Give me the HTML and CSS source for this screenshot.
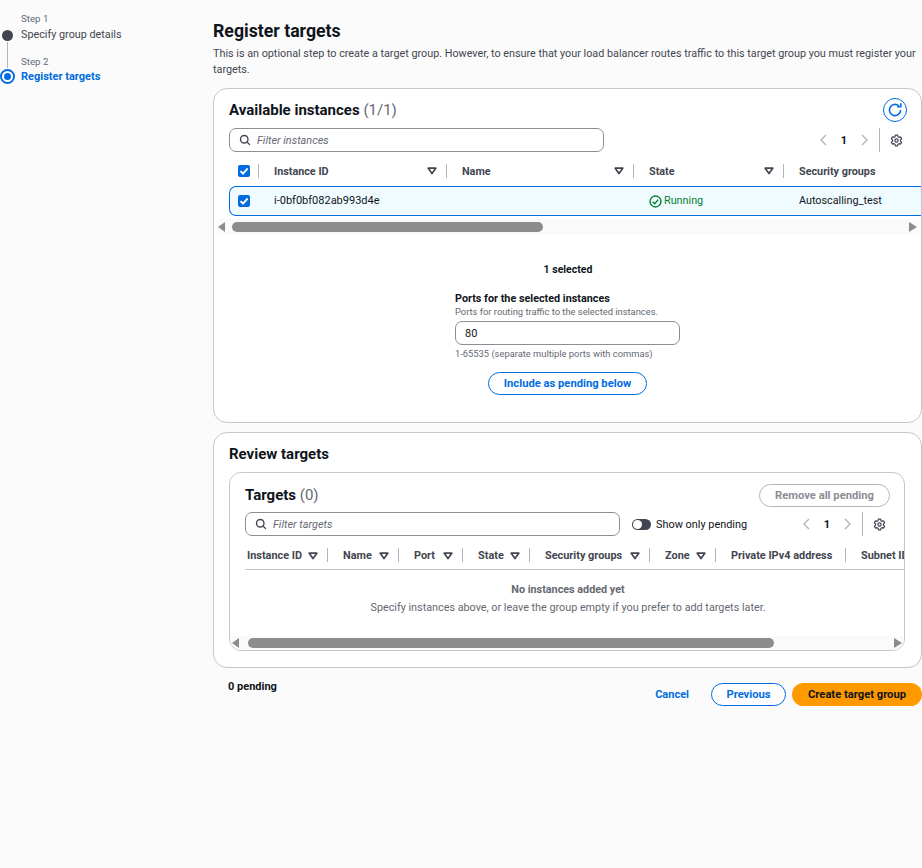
FILE: index.html
```html
<!DOCTYPE html>
<html lang="en">
<head>
<meta charset="utf-8">
<title>Register targets</title>
<link rel="stylesheet" href="styles.css">
</head>
<body>
<svg class="defs" width="0" height="0">
  <symbol id="search" viewBox="0 0 16 16"><circle cx="7" cy="7" r="5" fill="none" stroke="currentColor" stroke-width="1.8"/><path d="M10.7 10.7 14.5 14.5" stroke="currentColor" stroke-width="1.8" fill="none"/></symbol>
  <symbol id="caret" viewBox="0 0 10 8"><path d="M1.2 1.2h7.6L5 6.6z" fill="none" stroke="currentColor" stroke-width="1.7" stroke-linejoin="round"/></symbol>
  <symbol id="left" viewBox="0 0 8 12"><path d="M7 1 2 6l5 5" fill="none" stroke="currentColor" stroke-width="1.4"/></symbol>
  <symbol id="right" viewBox="0 0 8 12"><path d="M1 1l5 5-5 5" fill="none" stroke="currentColor" stroke-width="1.4"/></symbol>
  <symbol id="gear" viewBox="0 0 16 16"><path d="M6.6 1.5h2.8l.4 1.9 1.3.7 1.8-.6 1.4 2.4-1.4 1.3v1.6l1.4 1.3-1.4 2.4-1.8-.6-1.3.7-.4 1.9H6.6l-.4-1.9-1.3-.7-1.8.6-1.4-2.4 1.4-1.3V7.2L1.7 5.9l1.4-2.4 1.8.6 1.3-.7z" fill="none" stroke="currentColor" stroke-width="1.5" stroke-linejoin="round"/><circle cx="8" cy="8" r="2" fill="none" stroke="currentColor" stroke-width="1.5"/></symbol>
  <symbol id="check" viewBox="0 0 12 12"><path d="M2.5 6.2 5 8.7l4.6-5.2" fill="none" stroke="#fff" stroke-width="1.9"/></symbol>
</svg>
<div class="page">
  <nav class="steps">
    <div class="step">
      <div class="step-label">Step 1</div>
      <div class="step-title">Specify group details</div>
      <span class="dot"></span>
      <span class="line"></span>
    </div>
    <div class="step step-active">
      <div class="step-label">Step 2</div>
      <div class="step-title active">Register targets</div>
      <span class="dot-active"></span>
    </div>
  </nav>
  <main class="content">
    <h1>Register targets</h1>
    <p class="intro">This is an optional step to create a target group. However, to ensure that your load balancer routes traffic to this target group you must register your targets.</p>

    <section class="card card-available">
      <div class="card-head">
        <h2>Available instances <span class="count">(1/1)</span></h2>
        <button class="refresh" aria-label="Refresh"><svg width="16" height="16" viewBox="0 0 16 16"><path d="M13.6 8a5.6 5.6 0 1 1-1.8-4.1" fill="none" stroke="currentColor" stroke-width="1.6"/><path d="M13.8 1.2v3.6h-3.6" fill="none" stroke="currentColor" stroke-width="1.6"/></svg></button>
      </div>
      <div class="tools">
        <label class="filter filter-a"><svg class="i-search" width="12" height="12"><use href="#search"/></svg><span>Filter instances</span></label>
        <div class="pager">
          <svg class="chev" width="8" height="12"><use href="#left"/></svg>
          <b>1</b>
          <svg class="chev" width="8" height="12"><use href="#right"/></svg>
          <span class="vsep"></span>
          <svg class="gear" width="13" height="13"><use href="#gear"/></svg>
        </div>
      </div>
      <div class="grid-a grid-head">
        <div class="cell-check"><span class="box"><svg width="12" height="12"><use href="#check"/></svg></span></div>
        <div class="th">Instance ID<svg class="caret" width="10" height="8"><use href="#caret"/></svg></div>
        <div class="th">Name<svg class="caret" width="10" height="8"><use href="#caret"/></svg></div>
        <div class="th">State<svg class="caret" width="10" height="8"><use href="#caret"/></svg></div>
        <div class="th th-last">Security groups</div>
      </div>
      <div class="grid-a grid-row">
        <div class="cell-check"><span class="box"><svg width="12" height="12"><use href="#check"/></svg></span></div>
        <div class="td td-id">i-0bf0bf082ab993d4e</div>
        <div class="td"></div>
        <div class="td running"><svg width="13" height="13" viewBox="0 0 14 14"><circle cx="7" cy="7" r="5.9" fill="none" stroke="currentColor" stroke-width="1.5"/><path d="M4 7.2 6.2 9.4 10 5" fill="none" stroke="currentColor" stroke-width="1.5"/></svg>Running</div>
        <div class="td">Autoscalling_test</div>
      </div>
      <div class="scrollbar scroll-a">
        <i class="arrow-l"></i><span class="thumb thumb-a"></span><i class="arrow-r"></i>
      </div>
      <div class="selected">1 selected</div>
      <div class="ports">
        <div class="ports-label">Ports for the selected instances</div>
        <div class="ports-desc">Ports for routing traffic to the selected instances.</div>
        <div class="ports-input">80</div>
        <div class="ports-desc ports-hint">1-65535 (separate multiple ports with commas)</div>
      </div>
      <div class="include-wrap"><button class="btn btn-outline btn-include">Include as pending below</button></div>
    </section>

    <section class="card card-review">
      <h2 class="review-title">Review targets</h2>
      <div class="inner">
        <div class="inner-head">
          <h2>Targets <span class="count">(0)</span></h2>
          <button class="btn btn-disabled">Remove all pending</button>
        </div>
        <div class="tools tools-b">
          <label class="filter filter-b"><svg class="i-search" width="12" height="12"><use href="#search"/></svg><span>Filter targets</span></label>
          <div class="toggle"><span class="switch"></span>Show only pending</div>
          <div class="pager pager-b">
            <svg class="chev" width="8" height="12"><use href="#left"/></svg>
            <b>1</b>
            <svg class="chev" width="8" height="12"><use href="#right"/></svg>
            <span class="vsep"></span>
            <svg class="gear" width="13" height="13"><use href="#gear"/></svg>
          </div>
        </div>
        <div class="grid-b">
          <div class="tb c1">Instance ID<svg class="caret-b" width="10" height="8"><use href="#caret"/></svg></div>
          <div class="tb c2">Name<svg class="caret-b" width="10" height="8"><use href="#caret"/></svg></div>
          <div class="tb c3">Port<svg class="caret-b" width="10" height="8"><use href="#caret"/></svg></div>
          <div class="tb c4">State<svg class="caret-b" width="10" height="8"><use href="#caret"/></svg></div>
          <div class="tb c5">Security groups<svg class="caret-b" width="10" height="8"><use href="#caret"/></svg></div>
          <div class="tb c6">Zone<svg class="caret-b" width="10" height="8"><use href="#caret"/></svg></div>
          <div class="tb c7">Private IPv4 address</div>
          <div class="tb c8">Subnet ID</div>
        </div>
        <div class="empty">
          <div class="empty-title">No instances added yet</div>
          <div class="empty-desc">Specify instances above, or leave the group empty if you prefer to add targets later.</div>
        </div>
        <div class="scrollbar scroll-b">
          <i class="arrow-l"></i><span class="thumb thumb-b"></span><i class="arrow-r"></i>
        </div>
      </div>
    </section>

    <div class="footer">
      <div class="pending">0 pending</div>
      <div class="actions">
        <a class="cancel">Cancel</a>
        <button class="btn btn-outline btn-prev">Previous</button>
        <button class="btn btn-primary">Create target group</button>
      </div>
    </div>
  </main>
</div>
</body>
</html>
```

FILE: styles.css
```css
* { box-sizing: border-box; }
html, body { margin: 0; padding: 0; }
body {
  width: 922px;
  height: 868px;
  overflow: hidden;
  background: #fbfbfb;
  color: #0f141a;
  font-family: Roboto, "Noto Sans", sans-serif;
  font-size: 11px;
}
.defs { position: absolute; }
.page { display: flex; align-items: flex-start; }

.steps { width: 213px; flex: none; padding-top: 12px; }
.step { position: relative; padding-left: 21px; height: 42px; }
.step-label { font-size: 9.7px; line-height: 14px; color: #5f6b7a; }
.step-active .step-label { padding-top: 1px; line-height: 13px; height: 14px; }
.step-title { padding-top: 1px; font-size: 10.8px; line-height: 16px; color: #424650; }
.step-title.active { color: #006ce0; font-weight: 700; font-size: 11px; }
.dot { position: absolute; left: 2px; top: 18px; width: 11px; height: 11px; border-radius: 50%; background: #424650; }
.line { position: absolute; left: 7px; top: 30px; width: 1px; height: 26px; background: #b4b4bb; }
.dot-active { position: absolute; left: 0; top: 15px; width: 15px; height: 15px; border-radius: 50%; border: 2px solid #006ce0; background: #fff; }
.dot-active::after { content: ""; position: absolute; left: 2px; top: 2px; width: 7px; height: 7px; border-radius: 50%; background: #006ce0; }

.content { width: 709px; flex: none; padding-top: 20px; }
h1 { margin: 0; font-size: 17.7px; line-height: 22px; font-weight: 700; color: #0f141a; }
.intro { margin: 4px 0 0; width: 709px; font-size: 10.8px; line-height: 15.5px; color: #424650; height: 31px; }

.card { background: #fff; border: 1px solid #c6c6cd; border-radius: 14px; }
.card-available { margin-top: 11px; height: 335px; padding: 0 0 0 15px; overflow: hidden; }
.card-review { margin-top: 9px; height: 236px; padding: 0 0 0 15px; }

h2 { margin: 0; font-size: 15px; line-height: 20px; font-weight: 700; }
.count { font-weight: 400; color: #656871; }
.card-head { display: flex; justify-content: space-between; padding-top: 11px; height: 39px; }
.refresh { width: 24px; height: 24px; margin: -2px 14px 0 0; padding: 0; border: 1.5px solid #006ce0; border-radius: 50%; background: #fff; color: #006ce0; display: flex; align-items: center; justify-content: center; }

.tools { display: flex; align-items: center; height: 24px; }
.filter { display: flex; align-items: center; gap: 6px; height: 24px; padding-left: 9px; border: 1px solid #8c8c94; border-radius: 7px; background: #fff; font-style: italic; font-size: 10.9px; color: #656871; }
.filter-a { width: 375px; }
.filter-b { width: 375px; flex: none; }
.i-search { color: #424650; flex: none; }
.pager { display: flex; align-items: center; margin-left: auto; height: 24px; padding-right: 18px; color: #0f141a; }
.pager b { font-size: 11px; width: 34px; text-align: center; }
.chev { color: #b4b4bb; }
.vsep { width: 1px; height: 24px; background: #b4b4bb; margin: 0 10px 0 10px; }
.gear { color: #424650; }

.grid-a { display: grid; grid-template-columns: 29px 188px 187px 150px 138px; width: 692px; }
.grid-head { height: 31px; margin-top: 3px; align-items: center; }
.cell-check { padding-left: 9px; display: flex; align-items: center; height: 100%; }
.box { width: 12px; height: 12px; border-radius: 2px; background: #006ce0; display: block; }
.box svg { display: block; }
.th { position: relative; padding: 2px 0 0 16px; font-weight: 700; font-size: 10.8px; color: #424650; line-height: 16px; white-space: nowrap; }
.th::before { content: ""; position: absolute; left: 0; top: 2px; width: 1px; height: 14px; background: #b4b4bb; }
.caret { position: absolute; right: 9px; top: 5px; color: #424650; }
.grid-row { height: 30px; background: #f0fbff; border: 1px solid #006ce0; border-right: 0; border-radius: 7px 0 0 7px; align-items: center; width: 692px; }
.grid-row .cell-check { padding-left: 8px; }
.grid-row .box { margin-top: -1px; }
.td { padding-left: 15px; font-size: 10.8px; line-height: 16px; white-space: nowrap; color: #0f141a; }
.td-id { font-size: 11px; }
.running { display: flex; align-items: center; gap: 2px; color: #00802f; }

.scrollbar { position: relative; height: 16px; background: #fafafa; }
.scroll-a { margin: 3px 0 0 -12px; width: 702px; height: 16px; }
.thumb { position: absolute; top: 3px; height: 10px; border-radius: 5px; background: #8c8c8c; }
.thumb-a { left: 15px; width: 311px; }
.arrow-l, .arrow-r { position: absolute; top: 3px; width: 0; height: 0; border-top: 5px solid transparent; border-bottom: 5px solid transparent; }
.arrow-l { left: 1px; border-right: 7px solid #8c8c8c; }
.arrow-r { right: 2px; border-left: 8px solid #8c8c8c; }

.selected { margin: 27px 0 0; width: 678px; text-align: center; font-size: 10.5px; font-weight: 700; line-height: 16px; }
.ports { margin: 13px 0 0 226px; width: 225px; }
.ports-label { padding-top: 1px; height: 14px; font-size: 10.8px; font-weight: 700; line-height: 13px; color: #0f141a; }
.ports-desc { font-size: 9.35px; line-height: 13px; color: #656871; white-space: nowrap; }
.ports-input { height: 24px; margin-top: 3px; padding-left: 9px; border: 1px solid #8c8c94; border-radius: 7px; font-size: 11px; line-height: 23px; }
.ports-hint { margin-top: 2px; }
.include-wrap { margin: 12px 0 0 259px; }

.btn { font-family: inherit; font-weight: 700; font-size: 11.2px; height: 23px; padding: 0; border-radius: 12px; white-space: nowrap; }
.btn-outline { background: #fff; border: 1px solid #006ce0; color: #006ce0; }
.btn-include { width: 159px; }
.btn-disabled { width: 131px; background: #fff; border: 1px solid #b4b4bb; color: #8c8c94; }
.btn-prev { width: 75px; }
.btn-primary { width: 130px; background: #ff9900; border: 0; color: #0f141a; margin-left: 6px; }

.review-title { padding-top: 11px; height: 39px; }
.inner { position: relative; width: 676px; height: 179px; border: 1px solid #c6c6cd; border-radius: 12px; padding: 0 0 0 15px; overflow: hidden; }
.inner-head { display: flex; justify-content: space-between; align-items: center; padding: 8px 14px 0 0; height: 35px; }
.inner-head .btn { margin-top: 1px; }
.tools-b { margin-top: 4px; }
.toggle { display: flex; align-items: center; gap: 5px; margin-left: 12px; font-size: 10.9px; color: #0f141a; white-space: nowrap; }
.switch { position: relative; width: 19px; height: 11px; border-radius: 6px; background: #424650; }
.switch::after { content: ""; position: absolute; left: 1px; top: 1px; width: 9px; height: 9px; border-radius: 50%; background: #fff; }

.grid-b { display: grid; grid-template-columns: 82px 71px 64px 67px 120px 66px 130px 60px; width: 660px; height: 27px; margin-top: 7px; padding-top: 5px; border-bottom: 1px solid #c6c6cd; align-items: start; }
.tb { position: relative; font-weight: 700; font-size: 10.9px; line-height: 16px; color: #424650; padding-left: 16px; white-space: nowrap; }
.tb::before { content: ""; position: absolute; left: 0; top: 0; width: 1px; height: 14px; background: #b4b4bb; }
.tb.c1 { padding-left: 2px; }
.tb.c1::before { display: none; }
.caret-b { position: absolute; right: 9px; top: 4px; color: #424650; }

.empty { height: 75px; padding: 11px 0 0; width: 646px; text-align: center; font-size: 10.8px; line-height: 18px; color: #656871; }
.empty-title { font-weight: 700; }

.scroll-b { position: absolute; left: 0; bottom: 0; width: 674px; height: 14px; background: #fafafa; }
.scroll-b .thumb { top: 2px; }
.scroll-b .arrow-l { top: 2px; left: 2px; }
.scroll-b .arrow-r { top: 2px; right: 2px; }
.thumb-b { left: 18px; width: 526px; }

.footer { display: flex; justify-content: space-between; width: 709px; margin-top: 11px; padding-left: 15px; }
.pending { font-size: 11px; font-weight: 700; line-height: 16px; }
.actions { display: flex; align-items: center; margin-top: 4px; }
.cancel { color: #006ce0; font-weight: 700; font-size: 11px; margin-right: 22px; }
```
